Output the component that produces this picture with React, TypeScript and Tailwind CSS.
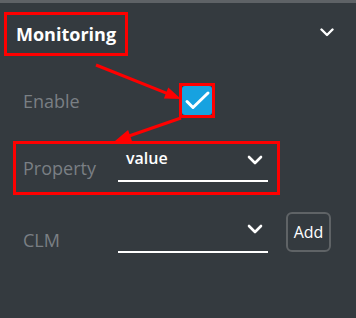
import React from "react";

function Chevron({ className = "" }: { className?: string }) {
  return (
    <svg className={className} width="16" height="10" viewBox="0 0 16 10" fill="none">
      <path d="M2 2 L8 8 L14 2" stroke="white" strokeWidth="2.6" strokeLinecap="round" strokeLinejoin="round" />
    </svg>
  );
}

export default function App() {
  return (
    <div
      className="relative w-[356px] h-[318px] overflow-hidden bg-[#343a3f] border-t-[3px] border-[#5e6266]"
      style={{ fontFamily: '"Open Sans", "Liberation Sans", sans-serif' }}
    >
      {/* Header */}
      <div className="flex items-center justify-between pt-[9px] pl-[4px] pr-[22px]">
        <div className="w-[124px] h-[44px] border-[3px] border-[#fe0000] flex items-center pl-[9px] text-[18px] font-bold text-white leading-none">
          Monitoring
        </div>
        <svg className="mb-[4px]" width="14" height="9" viewBox="0 0 14 9" fill="none">
          <path d="M1.5 1.5 L7 7 L12.5 1.5" stroke="white" strokeWidth="2.4" strokeLinecap="round" strokeLinejoin="round" />
        </svg>
      </div>

      {/* Enable */}
      <div className="flex items-center mt-[27px] pl-[23px]">
        <div className="w-[156px] text-[18px] text-[#7a7f84] leading-[24px]">Enable</div>
        <div className="w-[36px] h-[35px] border-[3px] border-[#fe0000]">
          <div className="w-full h-full rounded-[3px] bg-[#17a2e0] flex items-center justify-center">
            <svg width="30" height="29" viewBox="0 0 30 29" fill="none">
              <path d="M5 15.5 L11 21.5 L26 7" stroke="white" strokeWidth="3" strokeLinecap="round" strokeLinejoin="round" />
            </svg>
          </div>
        </div>
      </div>

      {/* Property */}
      <div className="mt-[23px] ml-[13px] w-[267px] h-[54px] border-[3px] border-[#fe0000] flex items-center pl-[7px]">
        <div className="w-[95px] text-[18px] text-[#7a7f84] leading-[24px]">Property</div>
        <div className="self-start mt-[3px] w-[150px] h-[35px] border-b-[2px] border-white flex items-start justify-between pl-[8px] pr-[5px]">
          <span className="text-[16px] font-semibold text-white leading-[22px]">value</span>
          <Chevron className="mt-[8px]" />
        </div>
      </div>

      {/* CLM */}
      <div className="flex items-start mt-[17px] pl-[23px]">
        <div className="w-[95px] mt-[16px] text-[18px] text-[#7a7f84] leading-[24px]">CLM</div>
        <div className="w-[150px] h-[41px] border-b-[2px] border-white flex items-start justify-end pr-[5px]">
          <Chevron className="mt-[12px]" />
        </div>
        <button className="ml-[18px] w-[45px] h-[40px] border-[2px] border-[#5f6366] rounded-[6px] text-white text-[16px] leading-none flex items-center justify-center">
          Add
        </button>
      </div>

      {/* Annotation arrows */}
      <svg className="absolute left-0 top-0 pointer-events-none" width="356" height="318" viewBox="0 -3 356 318">
        <line x1="96" y1="59" x2="167" y2="87.4" stroke="#fe0000" strokeWidth="3" />
        <polygon points="181,93 163.9,92.6 168.3,81.5" fill="#fe0000" />
        <line x1="181" y1="112" x2="129" y2="130" stroke="#fe0000" strokeWidth="3" />
        <polygon points="115,135 128.1,124 132.1,135.4" fill="#fe0000" />
      </svg>
    </div>
  );
}
